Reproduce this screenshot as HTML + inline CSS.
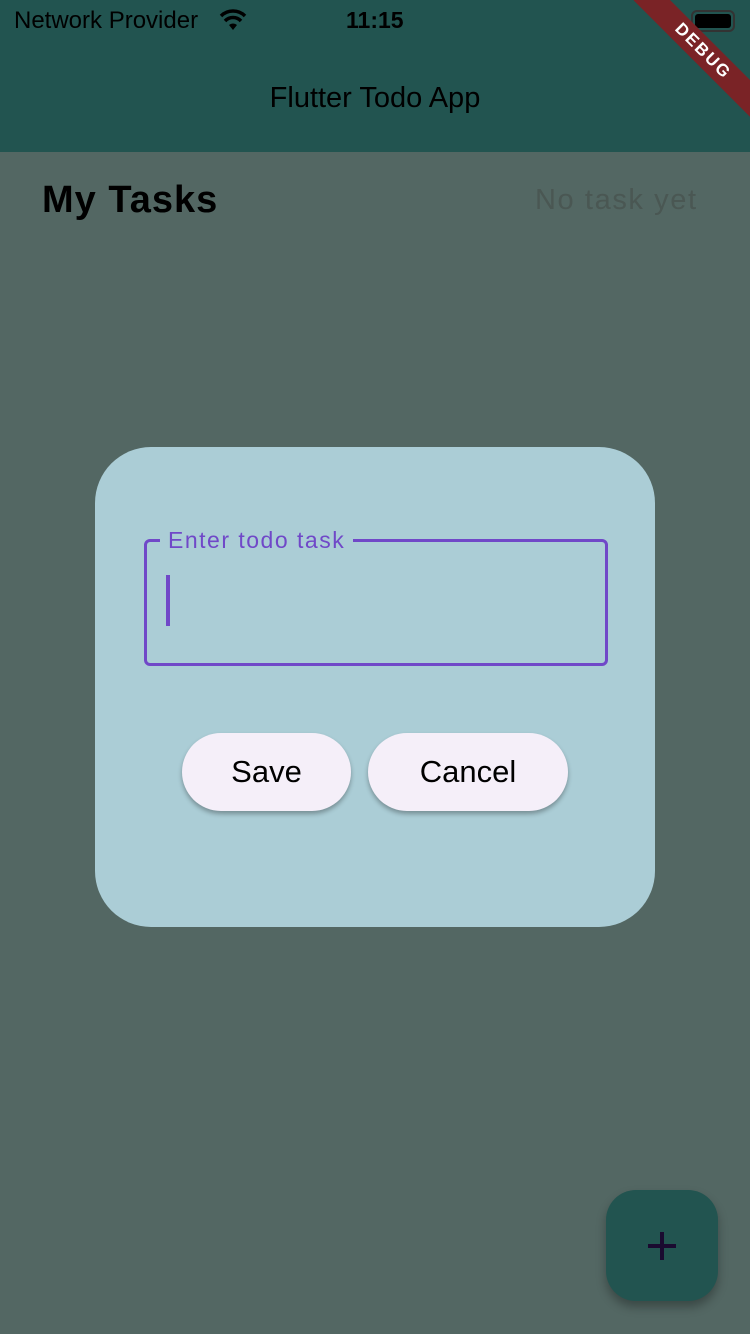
<!DOCTYPE html><html><head><style>
body{margin:0;width:750px;height:1334px;background:#536763;position:relative;overflow:hidden;font-family:"Liberation Sans",sans-serif}
.top{position:absolute;left:0;top:0;width:750px;height:152px;background:#225450}
.t{position:absolute;white-space:nowrap}
</style></head><body>
<div class="top"></div>
<div class="t" style="left:14px;top:7px;font-size:24px;color:#000">Network Provider</div>
<svg style="position:absolute;left:218px;top:9px" width="30" height="22" viewBox="0 0 30 22"><path d="M15 21 L11 16 A6 6 0 0 1 19 16Z" fill="#000"/><path d="M7 12 A11 11 0 0 1 23 12" stroke="#000" stroke-width="3.5" fill="none"/><path d="M3 7 A17 17 0 0 1 27 7" stroke="#000" stroke-width="3.5" fill="none"/></svg>
<div class="t" style="left:346px;top:7px;font-size:23px;font-weight:bold;color:#000">11:15</div>
<div style="position:absolute;left:691px;top:10px;width:40px;height:18px;border:2px solid #333;border-radius:6px"><div style="margin:2px;height:14px;background:#000;border-radius:3px"></div></div>
<div style="position:absolute;width:170px;height:26px;background:#7a2326;transform:rotate(45deg);transform-origin:0 0;color:#fff;font-weight:bold;font-size:17px;text-align:center;line-height:26px;letter-spacing:2px;left:652px;top:-18px">DEBUG</div>
<div class="t" style="left:0;width:750px;text-align:center;top:82px;font-size:29px;color:#000">Flutter Todo App</div>
<div class="t" style="left:42px;top:179px;font-size:38px;font-weight:bold;color:#000;letter-spacing:1px">My Tasks</div>
<div class="t" style="left:535px;top:184px;font-size:29px;color:#4a5753;letter-spacing:1.6px">No task yet</div>
<div style="position:absolute;left:95px;top:447px;width:560px;height:480px;background:#abcdd6;border-radius:56px"></div>
<div style="position:absolute;left:144px;top:539px;width:458px;height:121px;border:3px solid #7048c8;border-radius:6px"></div>
<div class="t" style="left:160px;top:527px;padding:0 8px;background:#abcdd6;font-size:23px;color:#7048c8;letter-spacing:1.5px">Enter todo task</div>
<div style="position:absolute;left:166px;top:575px;width:4px;height:51px;background:#7048c8"></div>
<div style="position:absolute;left:182px;top:733px;width:169px;height:78px;background:#f5eff9;border-radius:40px;box-shadow:0 3px 5px rgba(0,0,0,.3);text-align:center;line-height:78px;font-size:31px">Save</div>
<div style="position:absolute;left:368px;top:733px;width:200px;height:78px;background:#f5eff9;border-radius:40px;box-shadow:0 3px 5px rgba(0,0,0,.3);text-align:center;line-height:78px;font-size:31px">Cancel</div>
<div style="position:absolute;left:606px;top:1190px;width:112px;height:111px;background:#225450;border-radius:30px;box-shadow:0 6px 10px rgba(0,0,0,.3)"></div>
<div style="position:absolute;left:648px;top:1244px;width:28px;height:4px;background:#1a0a30"></div>
<div style="position:absolute;left:660px;top:1232px;width:4px;height:28px;background:#1a0a30"></div>
</body></html>
